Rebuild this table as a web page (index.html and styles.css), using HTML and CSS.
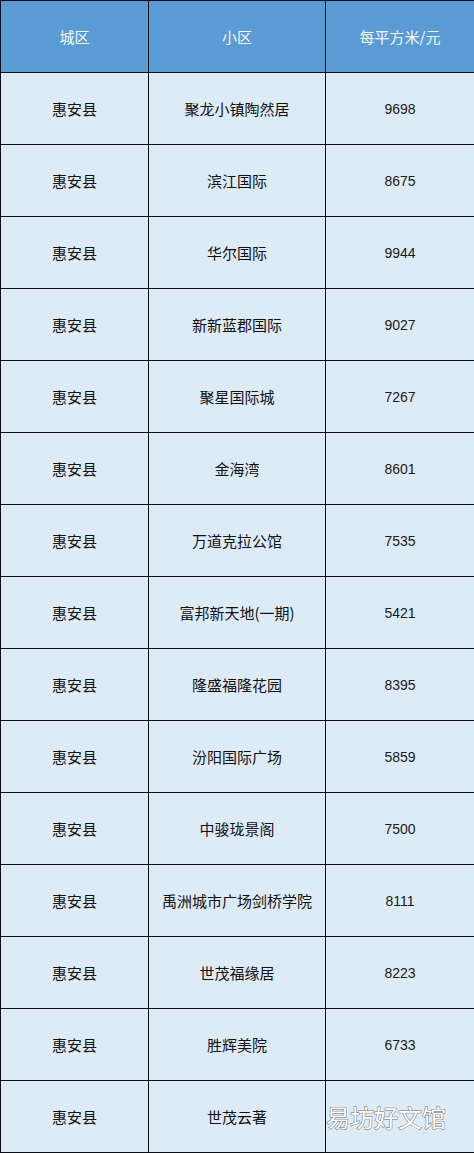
FILE: index.html
```html
<!DOCTYPE html>
<html lang="zh">
<head>
<meta charset="utf-8">
<link rel="stylesheet" href="styles.css">
</head>
<body>
<div class="wrap">
<table class="tbl">
<colgroup><col class="c1"><col class="c2"><col class="c3"></colgroup>
<thead>
<tr><th>城区</th><th>小区</th><th>每平方米/元</th></tr>
</thead>
<tbody>
<tr><td>惠安县</td><td>聚龙小镇陶然居</td><td class="num">9698</td></tr>
<tr><td>惠安县</td><td>滨江国际</td><td class="num">8675</td></tr>
<tr><td>惠安县</td><td>华尔国际</td><td class="num">9944</td></tr>
<tr><td>惠安县</td><td>新新蓝郡国际</td><td class="num">9027</td></tr>
<tr><td>惠安县</td><td>聚星国际城</td><td class="num">7267</td></tr>
<tr><td>惠安县</td><td>金海湾</td><td class="num">8601</td></tr>
<tr><td>惠安县</td><td>万道克拉公馆</td><td class="num">7535</td></tr>
<tr><td>惠安县</td><td>富邦新天地(一期)</td><td class="num">5421</td></tr>
<tr><td>惠安县</td><td>隆盛福隆花园</td><td class="num">8395</td></tr>
<tr><td>惠安县</td><td>汾阳国际广场</td><td class="num">5859</td></tr>
<tr><td>惠安县</td><td>中骏珑景阁</td><td class="num">7500</td></tr>
<tr><td>惠安县</td><td>禹洲城市广场剑桥学院</td><td class="num">8111</td></tr>
<tr><td>惠安县</td><td>世茂福缘居</td><td class="num">8223</td></tr>
<tr><td>惠安县</td><td>胜辉美院</td><td class="num">6733</td></tr>
<tr><td>惠安县</td><td>世茂云著</td><td class="num"></td></tr>
</tbody>
</table>
<div class="mark">易坊好文馆</div>
</div>
</body>
</html>
```
FILE: styles.css
```css
html, body { margin: 0; padding: 0; background: #ffffff; }
.wrap { position: relative; width: 474px; height: 1153px; overflow: hidden; }
.tbl {
  border-collapse: collapse;
  table-layout: fixed;
  width: 474px;
  font-family: "Noto Sans CJK SC", "DejaVu Sans", sans-serif;
}
.c1 { width: 148px; }
.c2 { width: 177px; }
.c3 { width: 149px; }
.tbl th, .tbl td {
  border: 1px solid #0d0d14;
  height: 71px;
  padding: 0;
  text-align: center;
  vertical-align: middle;
}
.tbl th {
  background: #5b9bd5;
  color: #f4f8fc;
  font-weight: normal;
  font-size: 15px;
}
.tbl td {
  background: #ddebf7;
  color: #111111;
  font-size: 15px;
}
.tbl td.num { font-size: 14px; font-family: "Liberation Sans", sans-serif; color: #1a1a1a; }
.mark {
  position: absolute;
  left: 326px;
  top: 1101px;
  font-family: "Noto Sans CJK SC", sans-serif;
  font-size: 24px;
  color: #ffffff;
  -webkit-text-stroke: 1px #6a6a6a;
  paint-order: stroke fill;
  line-height: 32px;
}
```
